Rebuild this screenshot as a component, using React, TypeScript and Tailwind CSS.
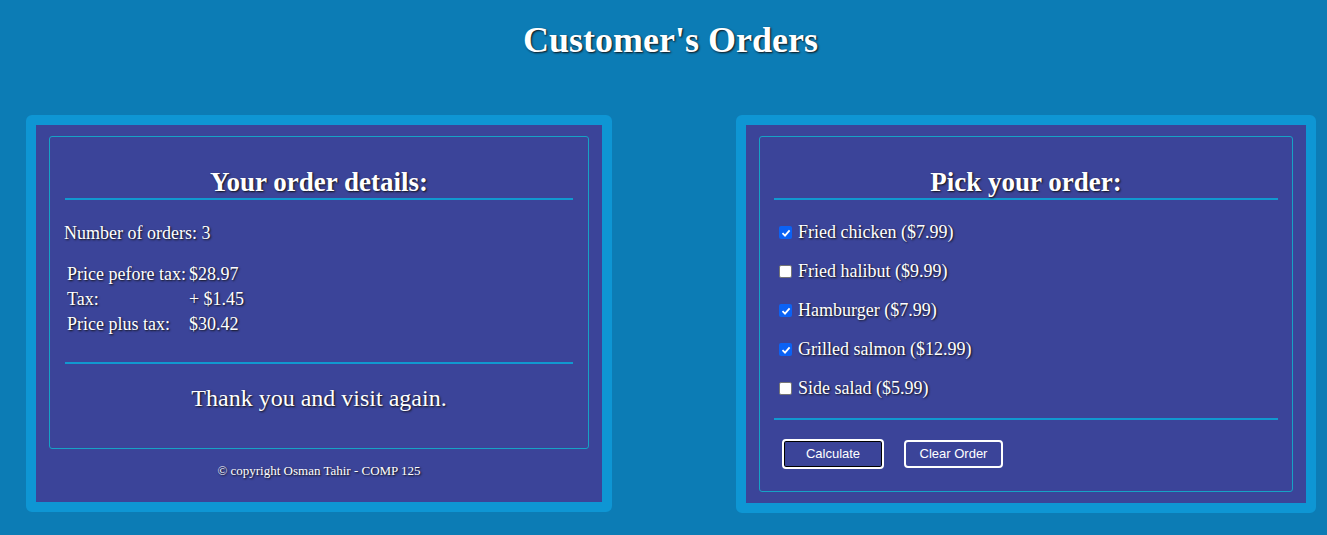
import React from "react";

const shadow = "[text-shadow:1px_1px_2px_#111]";

const items = [
  { label: "Fried chicken ($7.99)", checked: true },
  { label: "Fried halibut ($9.99)", checked: false },
  { label: "Hamburger ($7.99)", checked: true },
  { label: "Grilled salmon ($12.99)", checked: true },
  { label: "Side salad ($5.99)", checked: false },
];

function Check({ checked }: { checked: boolean }) {
  return checked ? (
    <span className="w-[13px] h-[13px] rounded-[2px] bg-[#0b62f5] flex items-center justify-center">
      <svg width="10" height="10" viewBox="0 0 10 10">
        <path d="M1.5 5.2 L4 7.6 L8.6 2.4" stroke="white" strokeWidth="1.8" fill="none" />
      </svg>
    </span>
  ) : (
    <span className="w-[13px] h-[13px] rounded-[2px] bg-white border border-[#767676]" />
  );
}

export default function App() {
  return (
    <div className="min-h-[535px] w-full bg-[#0c7cb5] text-white font-['Liberation_Serif',serif] overflow-hidden">
      <h1 className={`text-center text-[36px] font-bold leading-[41px] pt-[20px] pl-[14px] ${shadow}`}>
        Customer's Orders
      </h1>

      <div className="flex mt-[54px] pl-[26px]">
        {/* order details */}
        <div className="w-[586px] h-[397px] rounded-md border-[10px] border-[#0e96d4] bg-[#3b4499] px-[13px] pt-[11px]">
          <div className="h-[313px] rounded-[3px] border border-[#16a2c6] px-[15px] pt-[30px]">
            <h2 className={`text-center text-[27px] font-bold leading-[31px] border-b-2 border-[#1199d0] ${shadow}`}>
              Your order details:
            </h2>
            <p className={`mt-[22px] text-[18px] leading-[22px] -ml-[1px] ${shadow}`}>Number of orders: 3</p>
            <table className={`mt-[18px] text-[18px] leading-[25px] ${shadow}`}>
              <tbody>
                <tr>
                  <td className="pl-[2px] pr-[3px]">Price pefore tax:</td>
                  <td>$28.97</td>
                </tr>
                <tr>
                  <td className="pl-[2px]">Tax:</td>
                  <td>+ $1.45</td>
                </tr>
                <tr>
                  <td className="pl-[2px]">Price plus tax:</td>
                  <td>$30.42</td>
                </tr>
              </tbody>
            </table>
            <div className="mt-[25px] border-t-2 border-[#1199d0]" />
            <p className={`mt-[20px] text-center text-[24px] leading-[28px] ${shadow}`}>
              Thank you and visit again.
            </p>
          </div>
          <p className={`mt-[14px] text-center text-[13px] leading-[16px] ${shadow}`}>
            © copyright Osman Tahir - COMP 125
          </p>
        </div>

        {/* pick order */}
        <div className="ml-[124px] w-[580px] h-[398px] rounded-md border-[10px] border-[#0e96d4] bg-[#3b4499] px-[13px] pt-[11px]">
          <div className="h-[356px] rounded-[3px] border border-[#16a2c6] px-[14px] pt-[30px]">
            <h2 className={`text-center text-[27px] font-bold leading-[31px] border-b-2 border-[#1199d0] ${shadow}`}>
              Pick your order:
            </h2>
            <div className="mt-[13px] flex flex-col">
              {items.map((it) => (
                <label key={it.label} className="flex items-center h-[39px] pl-[5px]">
                  <Check checked={it.checked} />
                  <span className={`ml-[6px] text-[18px] ${shadow}`}>{it.label}</span>
                </label>
              ))}
            </div>
            <div className="mt-[10px] border-t-2 border-[#1199d0]" />
            <div className="flex items-center gap-[20px] mt-[19px] pl-[8px] font-['Liberation_Sans',sans-serif] text-[13px]">
              <button className="w-[102px] h-[30px] rounded-[4px] border-2 border-white bg-[#3b4499] text-white shadow-[inset_0_0_0_1px_#000]">
                Calculate
              </button>
              <button className="w-[99px] h-[28px] rounded-[4px] border-2 border-white bg-[#3b4499] text-white">
                Clear Order
              </button>
            </div>
          </div>
        </div>
      </div>
    </div>
  );
}
